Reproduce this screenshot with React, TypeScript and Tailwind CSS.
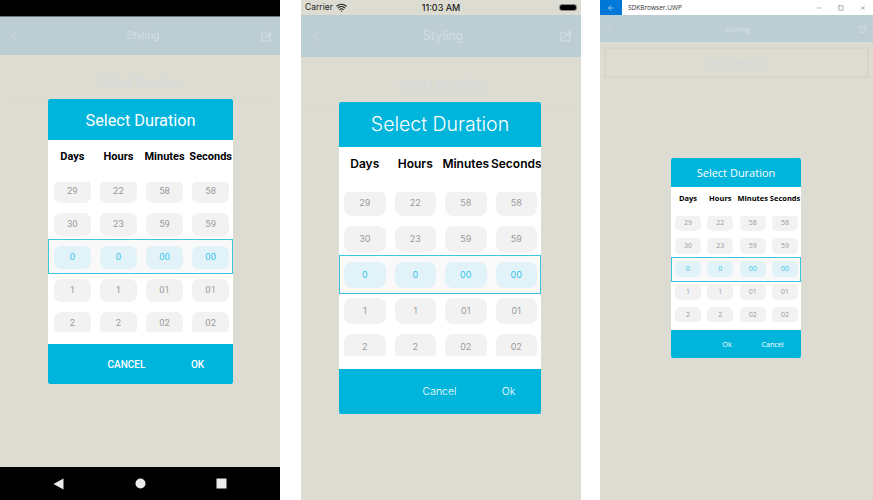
import { ArrowLeft, ChevronLeft, Minus, Square, Wifi, X } from "lucide-react";

interface DialogSkin {
  position: string;
  font: string;
  header: string;
  labels: string;
  labelGrid: string;
  viewport: string;
  inner: string;
  row: string;
  band: string;
  cell: string;
  footer: string;
  firstButton: string;
  secondButton: string;
  firstText: string;
  secondText: string;
}

const rows = [
  ["29", "22", "58", "58"],
  ["30", "23", "59", "59"],
  ["0", "0", "00", "00"],
  ["1", "1", "01", "01"],
  ["2", "2", "02", "02"],
];

const androidSkin: DialogSkin = {
  position: "left-[48px] top-[99px] w-[185px] h-[285px]",
  font: "font-['Roboto',sans-serif]",
  header: "h-[41px] pt-[3px] text-[16.3px]",
  labels: "h-[42px] pt-[10px] text-[11px] leading-[14px] font-bold",
  labelGrid: "pl-[6px] pr-[4px] gap-x-[9.5px]",
  viewport: "h-[150px] mb-[12px]",
  inner: "-mt-[7px]",
  row: "h-[33px] pt-[5px] pl-[6px] pr-[4px] gap-x-[9.5px]",
  band: "h-[35px] -mt-[2px] pt-[6px] pl-[5px] pr-[3px] gap-x-[9.5px]",
  cell: "h-[23px] rounded-[7px] text-[9.5px]",
  footer: "h-[40px] text-[10px] font-medium",
  firstButton: "w-[71px]",
  secondButton: "w-[71px]",
  firstText: "CANCEL",
  secondText: "OK",
};

const iosSkin: DialogSkin = {
  position: "left-[38px] top-[102px] w-[202px] h-[312px]",
  font: "font-['Inter',sans-serif]",
  header: "h-[45px] text-[19.5px] font-light",
  labels: "h-[45px] pt-[9px] text-[12px] leading-[15px] font-semibold",
  labelGrid: "pl-[5px] pr-[4px] gap-x-[9px]",
  viewport: "h-[164px] mb-[13px]",
  inner: "-mt-[7px]",
  row: "h-[36px] pt-[5px] pl-[5px] pr-[4px] gap-x-[9px]",
  band: "h-[39px] -mt-[2px] -mb-px pt-[6px] pl-[4px] pr-[3px] gap-x-[9px]",
  cell: "h-[26px] rounded-[8px] text-[9px]",
  footer: "h-[45px] text-[10.5px] font-light",
  firstButton: "w-[73px]",
  secondButton: "w-[65px]",
  firstText: "Cancel",
  secondText: "Ok",
};

const uwpSkin: DialogSkin = {
  position: "left-[71px] top-[158px] w-[130px] h-[200px]",
  font: "font-['Open_Sans',sans-serif]",
  header: "h-[29px] pt-[2px] text-[11px]",
  labels: "h-[29px] pt-[6px] text-[7.5px] leading-[10px] font-bold",
  labelGrid: "pl-[4px] pr-[3px] gap-x-[6.5px]",
  viewport: "h-[106px] mb-[8px]",
  inner: "-mt-[4px]",
  row: "h-[23px] pt-[3px] pl-[4px] pr-[3px] gap-x-[6.5px]",
  band: "h-[25px] -mt-px -mb-px pt-[3px] pl-[3px] pr-[2px] gap-x-[6.5px]",
  cell: "h-[16px] rounded-[5px] text-[7px]",
  footer: "h-[28px] text-[7.2px]",
  firstButton: "w-[34px]",
  secondButton: "w-[57px]",
  firstText: "Ok",
  secondText: "Cancel",
};

function ShareIcon({ size }: { size: number }) {
  return (
    <svg width={size} height={size} viewBox="0 0 16 16" fill="none" stroke="currentColor" strokeWidth="1.6">
      <path d="M8 3 H1.5 V14.5 H13 V8.5" />
      <path d="M6 10 C7 6.5 10 4.5 14.5 4.5" />
      <path d="M10.5 0.8 L15 4.5 L10.5 8.2" />
    </svg>
  );
}

function DurationDialog({ skin }: { skin: DialogSkin }) {
  return (
    <div className={`absolute flex flex-col overflow-hidden rounded-[2px] bg-white ${skin.position} ${skin.font}`}>
      <div className={`flex shrink-0 items-center justify-center bg-[#00b5dc] text-white ${skin.header}`}>
        Select Duration
      </div>
      <div className={`shrink-0 text-black ${skin.labels}`}>
        <div className={`grid grid-cols-4 ${skin.labelGrid}`}>
          {["Days", "Hours", "Minutes", "Seconds"].map((label) => (
            <div key={label} className="flex justify-center whitespace-nowrap">
              {label}
            </div>
          ))}
        </div>
      </div>
      <div className={`shrink-0 overflow-hidden ${skin.viewport}`}>
        <div className={skin.inner}>
          {rows.map((row, i) =>
            i === 2 ? (
              <div key={i} className={`relative grid grid-cols-4 border border-[#3cc6e2] bg-[#f9f9f9] ${skin.band}`}>
                {row.map((value, j) => (
                  <div key={j} className={`flex items-center justify-center bg-[#e2f2f9] text-[#36c5e8] ${skin.cell}`}>
                    {value}
                  </div>
                ))}
              </div>
            ) : (
              <div key={i} className={`grid grid-cols-4 ${skin.row}`}>
                {row.map((value, j) => (
                  <div key={j} className={`flex items-center justify-center bg-[#f2f2f2] text-[#9a9a9a] ${skin.cell}`}>
                    {value}
                  </div>
                ))}
              </div>
            ),
          )}
        </div>
      </div>
      <div className={`flex shrink-0 items-center justify-end bg-[#00b5dc] text-white ${skin.footer}`}>
        <div className={`text-center ${skin.firstButton}`}>{skin.firstText}</div>
        <div className={`text-center ${skin.secondButton}`}>{skin.secondText}</div>
      </div>
    </div>
  );
}

export default function App() {
  return (
    <div className="flex h-[500px] w-[873px] overflow-hidden bg-white">
      {/* Android */}
      <div className="relative flex h-full w-[280px] shrink-0 flex-col bg-[#dddcd3] font-['Roboto',sans-serif]">
        <div className="h-[17px] shrink-0 border-b border-[#6d7a7c] bg-black" />
        <div className="flex h-[38px] shrink-0 items-center justify-between bg-[#bccdd4] pl-[7px] pr-[8px] text-[#d3dee1]">
          <ChevronLeft size={13} strokeWidth={1.5} />
          <span className="ml-[5px] text-[11px]">Styling</span>
          <ShareIcon size={11} />
        </div>
        <div className="flex-1 px-[8px] pt-[10px]">
          <div className="flex h-[36px] items-center justify-center border-b border-[#d9d8cd] text-[12px] text-[#d2dadb]">
            Select Duration
          </div>
        </div>
        <div className="flex h-[33px] shrink-0 items-center bg-black pl-[53px]">
          <svg width="11" height="12" viewBox="0 0 11 12">
            <path d="M0.5 6 L10.5 0.5 V11.5 Z" fill="#ececec" />
          </svg>
          <svg className="ml-[71px]" width="11" height="11" viewBox="0 0 11 11">
            <circle cx="5.5" cy="5.5" r="5" fill="#ececec" />
          </svg>
          <svg className="ml-[70px]" width="11" height="11" viewBox="0 0 11 11">
            <rect x="0.5" y="0.5" width="10" height="10" fill="#ececec" />
          </svg>
        </div>
        <DurationDialog skin={androidSkin} />
      </div>

      {/* iOS */}
      <div className="relative ml-[21px] flex h-full w-[280px] shrink-0 flex-col bg-[#dddcd3] font-['Inter',sans-serif]">
        <div className="flex h-[15px] shrink-0 items-center justify-between pl-[4px] pr-[4px] text-[8.5px] text-[#222]">
          <div className="flex w-[60px] items-center gap-[3px]">
            <span>Carrier</span>
            <Wifi size={11} strokeWidth={2.5} />
          </div>
          <span className="text-[9px] font-medium">11:03 AM</span>
          <div className="flex w-[60px] justify-end">
            <div className="h-[7px] w-[18px] rounded-[3px] border border-[#8b8b85] bg-black" />
          </div>
        </div>
        <div className="flex h-[42px] shrink-0 items-center justify-between bg-[#bccdd4] pl-[7px] pr-[9px] text-[#d3dee1]">
          <ChevronLeft size={15} strokeWidth={1.5} />
          <span className="ml-[3px] text-[12.5px]">Styling</span>
          <ShareIcon size={12} />
        </div>
        <div className="flex-1 px-[8px] pt-[10px]">
          <div className="flex h-[39px] items-center justify-center border-b border-[#d9d8cd] text-[11.5px] text-[#d2dadb]">
            Select Duration
          </div>
        </div>
        <DurationDialog skin={iosSkin} />
      </div>

      {/* UWP */}
      <div className="relative ml-[19px] flex h-full w-[273px] shrink-0 flex-col bg-[#dddcd3] font-['Open_Sans',sans-serif]">
        <div className="flex h-[15px] shrink-0 items-center bg-white text-[#333]">
          <div className="flex h-full w-[22px] items-center justify-center bg-[#0078d7] text-white">
            <ArrowLeft size={8} strokeWidth={1.5} />
          </div>
          <span className="ml-[6px] text-[6.5px]">SDKBrowser.UWP</span>
          <div className="ml-auto flex items-center gap-[16px] pr-[7px]">
            <Minus size={6} strokeWidth={1.5} />
            <Square size={6} strokeWidth={1.5} />
            <X size={6} strokeWidth={1.5} />
          </div>
        </div>
        <div className="flex h-[27px] shrink-0 items-center justify-between bg-[#bccdd4] pl-[4px] pr-[6px] text-[#d6e0e3]">
          <ChevronLeft size={10} strokeWidth={1.5} />
          <span className="ml-[2px] text-[8px]">Styling</span>
          <ShareIcon size={8} />
        </div>
        <div className="flex-1 px-[4px] pt-[5px]">
          <div className="flex h-[31px] items-center justify-center border-2 border-[#d6d5c6] text-[7.5px] text-[#d2dadb]">
            Select Duration
          </div>
        </div>
        <DurationDialog skin={uwpSkin} />
      </div>
    </div>
  );
}
